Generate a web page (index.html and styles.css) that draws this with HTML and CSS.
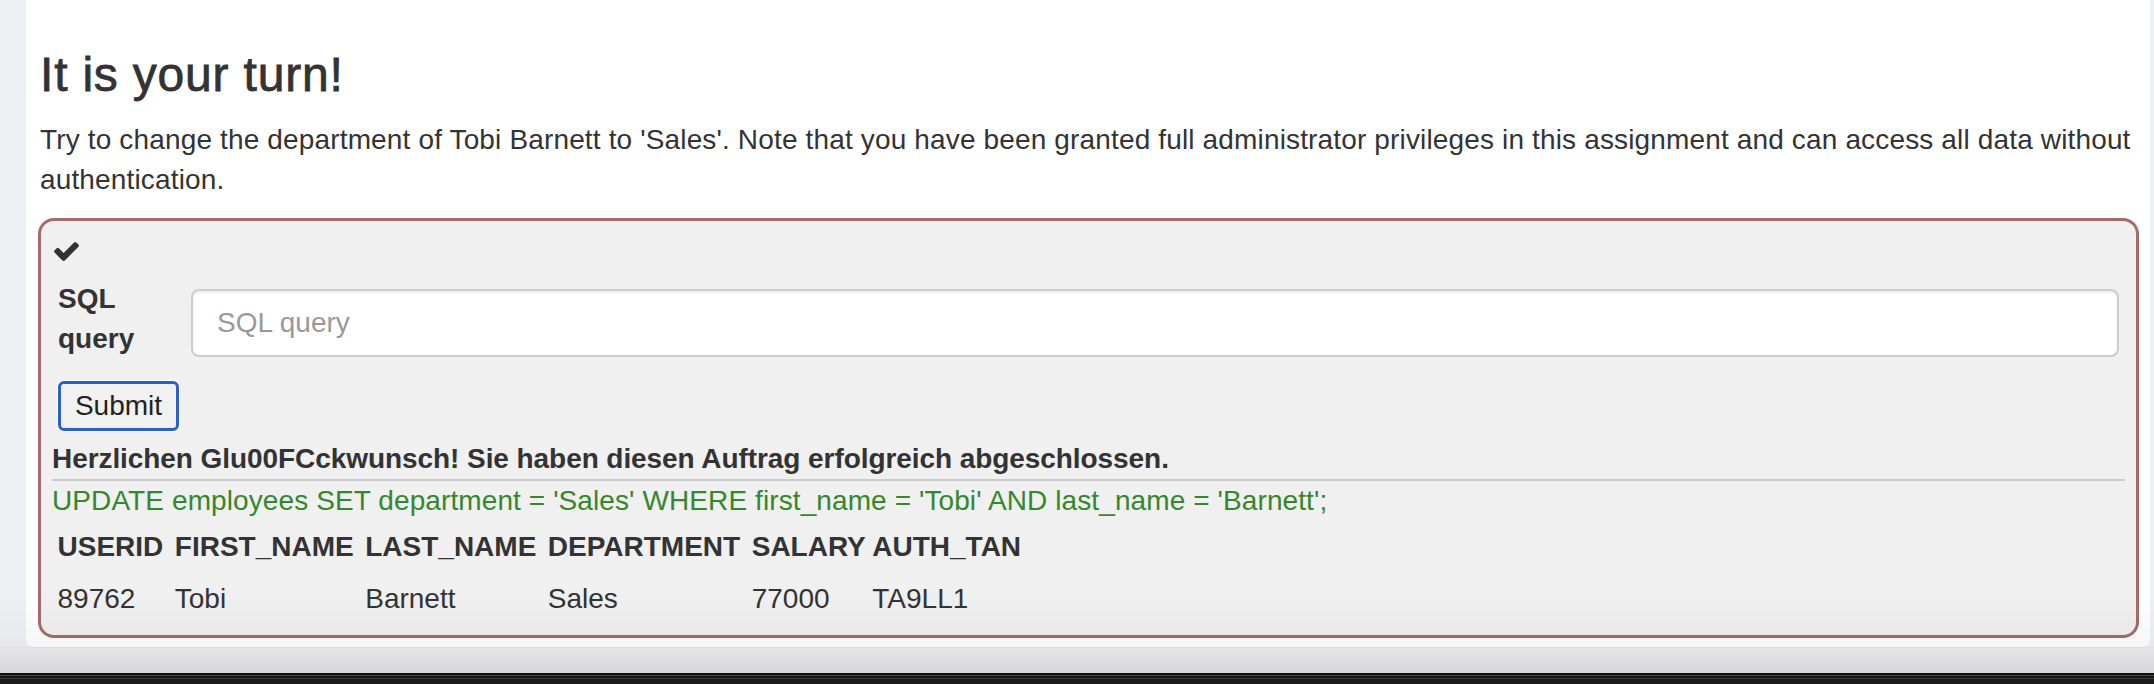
FILE: index.html
```html
<!DOCTYPE html>
<html lang="en">
<head>
<meta charset="utf-8">
<title>SQL Injection - It is your turn!</title>
<link rel="stylesheet" href="styles.css">
</head>
<body>
<div class="page">
  <main class="card">
    <h3 class="lesson-title">It is your turn!</h3>
    <p class="lesson-text">Try to change the department of Tobi Barnett to 'Sales'. Note that you have been granted full administrator privileges in this assignment and can access all data without authentication.</p>
    <section class="attack-box">
      <svg class="check" viewBox="121 334 1550 1188" aria-hidden="true"><path d="M1671 566q0 40-28 68l-724 724-136 136q-28 28-68 28t-68-28l-136-136-362-362q-28-28-28-68t28-68l136-136q28-28 68-28t68 28l294 295 656-657q28-28 68-28t68 28l136 136q28 28 28 68z"/></svg>
      <form class="query-form">
        <div class="form-row">
          <label class="form-label" for="query">SQL query</label>
          <input class="form-input" id="query" type="text" placeholder="SQL query">
        </div>
        <button class="submit-btn" type="button">Submit</button>
      </form>
      <div class="feedback">Herzlichen Glu00FCckwunsch! Sie haben diesen Auftrag erfolgreich abgeschlossen.</div>
      <div class="output">
        <div class="sql-line">UPDATE employees SET department = 'Sales' WHERE first_name = 'Tobi' AND last_name = 'Barnett';</div>
        <table class="results">
          <tr><th>USERID</th><th>FIRST_NAME</th><th>LAST_NAME</th><th>DEPARTMENT</th><th class="col-salary">SALARY</th><th>AUTH_TAN</th></tr>
          <tr><td>89762</td><td>Tobi</td><td>Barnett</td><td>Sales</td><td class="col-salary">77000</td><td>TA9LL1</td></tr>
        </table>
      </div>
    </section>
  </main>
  <div class="below"></div>
  <div class="dock-edge"></div>
</div>
</body>
</html>
```

FILE: styles.css
```css
* { box-sizing: border-box; }
html, body {
  margin: 0;
  padding: 0;
}
body {
  background: #eff0f4;
  font-family: "Liberation Sans", Arial, Helvetica, sans-serif;
  color: #333;
  font-size: 28px;
  line-height: 40px;
  overflow: hidden;
}
.page {
  position: relative;
  width: 2154px;
  height: 684px;
}
.page::after {
  content: "";
  position: absolute;
  left: 0;
  right: 0;
  top: 590px;
  height: 58px;
  background: linear-gradient(rgba(0,0,0,0), rgba(0,0,0,0.035));
  pointer-events: none;
}
.card {
  margin-left: 26px;
  width: 2124px;
  background: #fff;
  padding: 49px 11px 9px 12px;
  border-radius: 0 0 7px 7px;
}
.lesson-title {
  margin: 0 0 18px 0;
  padding-left: 2px;
  font-size: 48px;
  line-height: 52.8px;
  font-weight: 500;
  letter-spacing: 0.8px;
  -webkit-text-stroke: 0.8px #333;
}
.lesson-text {
  margin: 0 0 18px 0;
  padding-left: 2px;
  letter-spacing: 0.15px;
}
.attack-box {
  border: 3px solid #a56b69;
  border-radius: 16px;
  background: #f0f0f0;
  padding: 21px 11px 11px 11px;
}
.check {
  display: block;
  width: 25px;
  height: 19px;
  margin: 0 0 18px 2px;
  fill: #333;
}
.form-row {
  display: flex;
  align-items: flex-start;
}
.form-label {
  width: 118px;
  margin-left: 6px;
  font-weight: bold;
  line-height: 40px;
}
.form-input {
  flex: 1;
  margin: 10px 6px 0 15px;
  height: 68px;
  border: 2px solid #ccc;
  border-radius: 8px;
  background: #fff;
  padding: 0 24px;
  font: 28px "Liberation Sans", Arial, sans-serif;
  color: #555;
  box-shadow: inset 0 2px 2px rgba(0,0,0,0.075);
}
.form-input::placeholder { color: #999; }
.submit-btn {
  display: flex;
  align-items: center;
  justify-content: center;
  margin: 22px 0 0 6px;
  width: 121px;
  height: 50px;
  padding: 0;
  border: 3px solid #2c5fca;
  border-radius: 6px;
  background: #f1f1f1;
  box-shadow: 0 0 0 1px #fff;
  font: 28px "Liberation Sans", Arial, sans-serif;
  color: #222;
}
.feedback {
  margin-top: 8px;
  font-weight: bold;
  line-height: 40px;
  letter-spacing: -0.07px;
  border-bottom: 2px solid #cbcbcb;
}
.sql-line {
  color: #35872b;
  line-height: 40px;
  letter-spacing: 0.1px;
}
.results {
  border-collapse: collapse;
  margin-top: 1px;
}
.results th,
.results td {
  text-align: left;
  padding: 5.5px 6px 5.5px 5.5px;
  line-height: 40px;
  white-space: nowrap;
}
.results th { font-weight: bold; }
.results td {
  font-weight: normal;
  padding-top: 6px;
}
.results .col-salary { padding-right: 1px; }
.below {
  height: 26px;
  background: linear-gradient(#e6e6ea, #d6d6da);
}
.dock-edge {
  height: 11px;
  background: linear-gradient(#0e0e0e 0 2px, #4a4a4a 2px 3px, #161616 3px 5px, #3a3a3a 5px 6px, #1d1d1d 6px);
}
```
